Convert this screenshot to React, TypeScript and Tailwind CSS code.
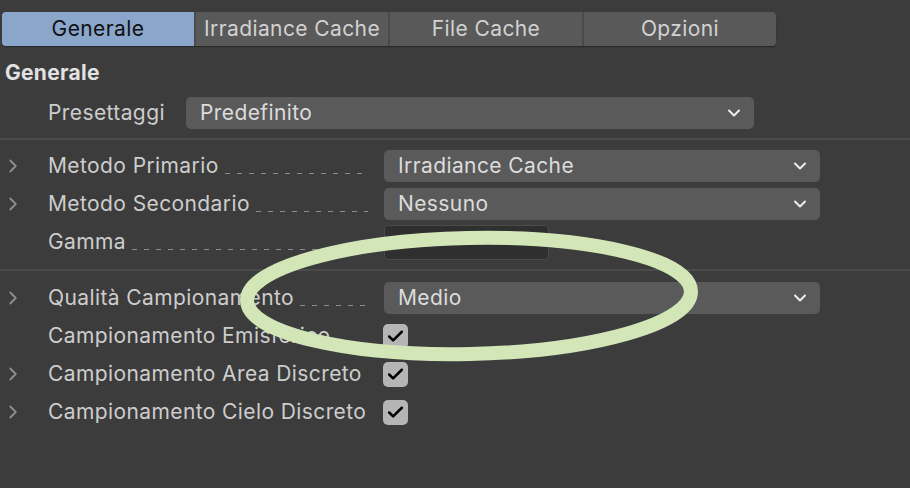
import { ChevronDown, ChevronRight, Check } from "lucide-react";

const tabs = ["Generale", "Irradiance Cache", "File Cache", "Opzioni"];

function Leader() {
  return (
    <div className="mx-[6px] mt-[14px] h-[1px] flex-1 bg-[repeating-linear-gradient(90deg,#8c8c8c_0_5px,transparent_5px_12px)]" />
  );
}

function Row({
  label,
  expandable,
  leader,
  children,
}: {
  label: string;
  expandable?: boolean;
  leader?: boolean;
  children: React.ReactNode;
}) {
  return (
    <div className="flex h-[38px] items-center">
      <div className="flex w-[48px] items-center pl-[2px] text-[#8e8e8e]">
        {expandable && <ChevronRight size={22} strokeWidth={2} />}
      </div>
      <div className="flex w-[336px] items-center pr-[10px]">
        <span className="whitespace-nowrap">{label}</span>
        {leader && <Leader />}
      </div>
      {children}
    </div>
  );
}

function Select({ value, className }: { value: string; className: string }) {
  return (
    <div
      className={`flex h-[32px] items-center justify-between rounded-[5px] bg-[#5a5a5a] pl-[14px] pr-[10px] text-[#dcdcdc] ${className}`}
    >
      <span>{value}</span>
      <ChevronDown size={20} strokeWidth={2.4} className="text-[#ededed]" />
    </div>
  );
}

function Checkbox() {
  return (
    <div className="-ml-[1px] flex h-[25px] w-[25px] items-center justify-center rounded-[5px] bg-[#b5b5b5]">
      <Check size={19} strokeWidth={3.2} className="text-black" />
    </div>
  );
}

export default function App() {
  return (
    <div
      className="relative h-[488px] w-[910px] overflow-hidden bg-[#3c3c3c] text-[21px] tracking-[0.4px] text-[#cdcdcd]"
      style={{ fontFamily: "Inter, 'Noto Sans', sans-serif" }}
    >
      <div className="pl-[2px] pt-[12px]">
        <div className="flex h-[34px] w-[774px] overflow-hidden rounded-[4px] bg-[#595959] shadow-[0_1px_1px_rgba(0,0,0,0.35)]">
          {tabs.map((t, i) => (
            <div
              key={t}
              className={`flex flex-1 items-center justify-center ${
                i === 0
                  ? "bg-[#8ba6cb] text-[#111111]"
                  : "border-l-2 border-[#4a4a4a] text-[#d2d2d2]"
              }`}
            >
              {t}
            </div>
          ))}
        </div>
      </div>

      <div className="pl-[5px] pt-[14px] text-[21px] font-bold leading-[26px] tracking-[0.3px] text-[#e2e2e2]">
        Generale
      </div>

      <div className="mt-[8px] flex h-[38px] items-center">
        <span className="w-[186px] pl-[48px]">Presettaggi</span>
        <Select value="Predefinito" className="w-[568px]" />
      </div>

      <div className="mt-[6px] h-[2px] bg-[#4b4b4b]" />

      <div className="mt-[7px]">
        <Row label="Metodo Primario" expandable leader>
          <Select value="Irradiance Cache" className="w-[436px]" />
        </Row>
        <Row label="Metodo Secondario" expandable leader>
          <Select value="Nessuno" className="w-[436px]" />
        </Row>
        <Row label="Gamma" leader>
          <div className="flex h-[35px] w-[165px] items-center justify-between rounded-[4px] border border-[#4b4b4b] bg-[#2f2f2f] pl-[13px] pr-[8px] text-[#a0a0a0]">
            <span className="text-[14px]">1</span>
            <ChevronDown size={18} strokeWidth={2} className="text-[#5c5c5c]" />
          </div>
        </Row>
      </div>

      <div className="mt-[8px] h-[2px] bg-[#4b4b4b]" />

      <div className="mt-[8px]">
        <Row label="Qualità Campionamento" expandable leader>
          <Select value="Medio" className="w-[436px]" />
        </Row>
        <Row label="Campionamento Emisferico">
          <Checkbox />
        </Row>
        <Row label="Campionamento Area Discreto" expandable>
          <Checkbox />
        </Row>
        <Row label="Campionamento Cielo Discreto" expandable>
          <Checkbox />
        </Row>
      </div>

      <svg
        className="pointer-events-none absolute left-0 top-0"
        width="910"
        height="488"
        viewBox="0 0 910 488"
      >
        <ellipse
          cx="469"
          cy="296"
          rx="222"
          ry="58"
          fill="none"
          stroke="#d2e6b8"
          strokeWidth="14"
          transform="rotate(-1.2 469 296)"
        />
      </svg>
    </div>
  );
}
